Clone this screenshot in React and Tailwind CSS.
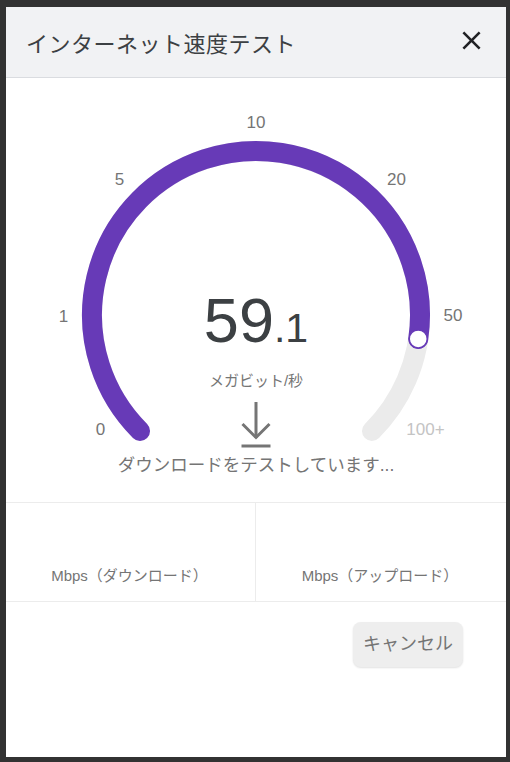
import React from "react";

const CX = 250;
const CY = 237;
const R = 164;

// point on the gauge circle, angle measured clockwise from the top
function polar(deg) {
  const rad = (deg * Math.PI) / 180;
  return [CX + R * Math.sin(rad), CY - R * Math.cos(rad)];
}

const labels = [
  { text: "0", x: 94.5, y: 351 },
  { text: "1", x: 57.5, y: 238 },
  { text: "5", x: 113.5, y: 101 },
  { text: "10", x: 250, y: 44 },
  { text: "20", x: 390.5, y: 101 },
  { text: "50", x: 447, y: 237.5 },
];

function Gauge() {
  const [sx, sy] = polar(-135);
  const [ex, ey] = polar(135);
  const [kx, ky] = polar(98.4);

  return (
    <svg
      className="absolute inset-0"
      width="500"
      height="424"
      viewBox="0 0 500 424"
    >
      <path
        d={`M ${sx} ${sy} A ${R} ${R} 0 1 1 ${ex} ${ey}`}
        fill="none"
        stroke="#ebebeb"
        strokeWidth="20"
        strokeLinecap="round"
      />
      <path
        d={`M ${sx} ${sy} A ${R} ${R} 0 1 1 ${kx} ${ky}`}
        fill="none"
        stroke="#673ab7"
        strokeWidth="20"
        strokeLinecap="round"
      />
      <circle cx={kx} cy={ky} r="9" fill="#fff" stroke="#673ab7" strokeWidth="1.5" />
      {labels.map((l) => (
        <text
          key={l.text}
          x={l.x}
          y={l.y}
          textAnchor="middle"
          dominantBaseline="central"
          fontSize="17"
          fill="#757575"
        >
          {l.text}
        </text>
      ))}
      <text
        x="419.5"
        y="351"
        textAnchor="middle"
        dominantBaseline="central"
        fontSize="17"
        fill="#c4c4c4"
      >
        100+
      </text>
    </svg>
  );
}

function DownloadIcon() {
  return (
    <svg width="30" height="46" viewBox="0 0 30 46" fill="none" stroke="#757575" strokeWidth="3">
      <path d="M15 0 V36" />
      <path d="M1.5 22 L15 35.5 L28.5 22" strokeLinejoin="miter" />
      <path d="M0.5 44 H29.5" />
    </svg>
  );
}

export default function App() {
  return (
    <div className="min-h-screen w-full bg-[#323232] pl-[6px] pt-[7px] font-['Liberation_Sans','Noto_Sans_CJK_JP',sans-serif]">
      <div className="w-[500px] h-[750px] bg-white flex flex-col">
        {/* header */}
        <div className="h-[71px] bg-[#f1f2f4] border-b border-[#dadce0] flex items-center justify-between pl-[20px] pr-[19px]">
          <h1 className="text-[22px] text-[#3c4043] pt-[5px] tracking-[0.5px]">
            インターネット速度テスト
          </h1>
          <button className="-mt-[3px]" aria-label="閉じる">
            <svg width="31" height="31" viewBox="0 0 24 24" fill="#202124">
              <path d="M19 6.41L17.59 5 12 10.59 6.41 5 5 6.41 10.59 12 5 17.59 6.41 19 12 13.41 17.59 19 19 17.59 13.41 12z" />
            </svg>
          </button>
        </div>

        {/* gauge */}
        <div className="relative h-[425px] border-b border-[#ececec]">
          <Gauge />
          <div className="relative flex flex-col items-center pt-[211px]">
            <div className="flex items-baseline text-[#3c4043] leading-none">
              <span className="text-[63px] leading-none">59</span>
              <span className="text-[41px] leading-none">.1</span>
            </div>
            <div className="mt-[19px] text-[15px] leading-5 text-[#757575]">
              メガビット/秒
            </div>
            <div className="mt-[11px]">
              <DownloadIcon />
            </div>
            <div className="mt-[5px] text-[17.5px] leading-6 text-[#757575]">
              ダウンロードをテストしています...
            </div>
          </div>
        </div>

        {/* results */}
        <div className="grid grid-cols-2 h-[99px] border-b border-[#ececec]">
          <div className="border-r border-[#ececec] flex flex-col justify-end items-center pb-[15px] pr-[2px]">
            <span className="text-[15px] leading-5 text-[#757575]">Mbps（ダウンロード）</span>
          </div>
          <div className="flex flex-col justify-end items-center pb-[15px] pr-[2px]">
            <span className="text-[15px] leading-5 text-[#757575]">Mbps（アップロード）</span>
          </div>
        </div>

        {/* actions */}
        <div className="flex justify-end pr-[43px] pt-[20px]">
          <button className="w-[110px] h-[45px] rounded-lg bg-[#eeeeee] shadow-[0_1px_2px_rgba(0,0,0,0.12)] text-[18px] text-[#757575] flex items-center justify-center">
            キャンセル
          </button>
        </div>
      </div>
    </div>
  );
}
